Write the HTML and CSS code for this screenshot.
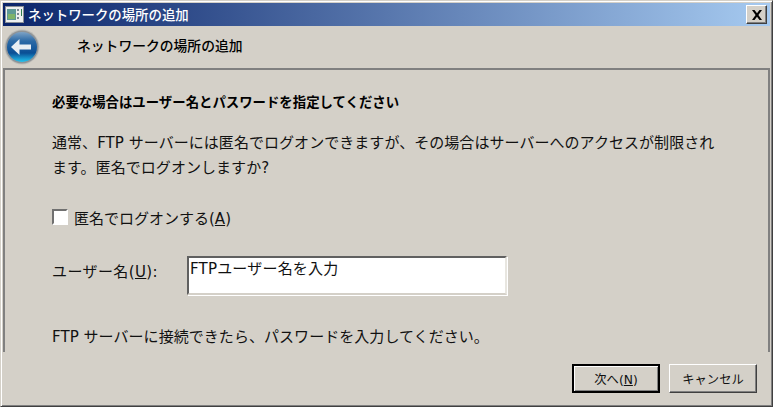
FILE: index.html
```html
<!DOCTYPE html>
<html lang="ja">
<head>
  <meta charset="UTF-8">
  <title>ネットワークの場所の追加</title>
  <link rel="stylesheet" href="styles.css">
</head>
<body>

  <div class="window">
    <!-- Title bar -->
    <div class="titlebar">
      <svg class="app-icon" width="19" height="17" viewBox="0 0 19 17">
        <rect x="0.5" y="0.5" width="18" height="16" fill="#eef0f0" stroke="#8a8f96"/>
        <rect x="2" y="3" width="9" height="11" fill="#5f9a96"/>
        <rect x="3" y="8" width="7" height="5" fill="#7fb36a"/>
        <rect x="12" y="3" width="2" height="2" fill="#7c8794"/>
        <rect x="12" y="7" width="2" height="2" fill="#7c8794"/>
        <rect x="12" y="11" width="2" height="2" fill="#7c8794"/>
        <rect x="16" y="3" width="1" height="7" fill="#2f7d4f"/>
      </svg>
      <span class="title-text">ネットワークの場所の追加</span>
      <button class="close-btn" aria-label="閉じる">
        <svg width="10" height="10" viewBox="0 0 10 10">
          <path d="M0 0h2.500l2.500 3.200 2.500-3.200h2.500l-3.600 5 3.600 5h-2.500l-2.500-3.200-2.500 3.200h-2.500l3.600-5z" fill="#000"/>
        </svg>
      </button>
    </div>

    <!-- Wizard header -->
    <div class="wizard-head">
      <svg class="back-icon" width="36" height="36" viewBox="0 0 36 36">
        <defs>
          <linearGradient id="orb" x1="0" y1="0" x2="0" y2="1">
            <stop offset="0" stop-color="#7ea3c6"/>
            <stop offset="0.3" stop-color="#2c6aa6"/>
            <stop offset="0.7" stop-color="#0a4f96"/>
            <stop offset="1" stop-color="#22c4f0"/>
          </linearGradient>
        </defs>
        <circle cx="18" cy="18" r="17.500" fill="#bdbdb9"/>
        <circle cx="18" cy="18" r="16.500" fill="#8f9498"/>
        <circle cx="18" cy="18" r="15" fill="url(#orb)"/>
        <path d="M7 18l8.500-8v5.500h11.500v5h-11.500v5.500z" fill="#e8eef3"/>
      </svg>
      <span class="wizard-title">ネットワークの場所の追加</span>
    </div>

    <!-- Content -->
    <div class="panel">
      <h1 class="heading">必要な場合はユーザー名とパスワードを指定してください</h1>
      <p class="intro">通常、FTP サーバーには匿名でログオンできますが、その場合はサーバーへのアクセスが制限され<br>ます。匿名でログオンしますか?</p>

      <label class="check-row">
        <span class="checkbox"></span>
        <span>匿名でログオンする(<u>A</u>)</span>
      </label>

      <div class="field-row">
        <span class="field-label">ユーザー名(<u>U</u>):</span>
        <div class="text-input">FTPユーザー名を入力</div>
      </div>

      <p class="note">FTP サーバーに接続できたら、パスワードを入力してください。</p>
    </div>

    <!-- Buttons -->
    <div class="footer">
      <button class="btn btn-default">次へ(<u>N</u>)</button>
      <button class="btn">キャンセル</button>
    </div>
  </div>

</body>
</html>
```

FILE: styles.css
```css
html, body {
  margin: 0;
  padding: 0;
  height: 100%;
  overflow: hidden;
}
body {
  background: #d4d0c8;
  color: #111;
  font-family: "DejaVu Sans", "Noto Sans CJK JP", sans-serif;
  font-size: 15px;
}
.window {
  box-sizing: border-box;
  width: 773px;
  height: 407px;
  display: flex;
  flex-direction: column;
  padding: 1px;
  border-top: 1px solid #d4d0c8;
  border-left: 1px solid #d4d0c8;
  border-right: 1px solid #404040;
  border-bottom: 1px solid #404040;
  box-shadow: inset 1px 1px 0 #fff, inset -1px -1px 0 #808080;
  background: #d4d0c8;
}
.titlebar {
  flex: none;
  height: 23px;
  margin: 1px 1px 0;
  padding: 0 3px 0 2px;
  display: flex;
  align-items: center;
  background: linear-gradient(to right, #0a246a, #a6caf0);
  color: #fff;
}
.app-icon {
  flex: none;
}
.title-text {
  margin-left: 4px;
  flex: 1;
  margin-top: -2px;
  font-size: 13.400px;
  font-weight: 500;
}
.close-btn {
  box-sizing: border-box;
  width: 21px;
  height: 19px;
  padding: 0;
  display: flex;
  align-items: center;
  justify-content: center;
  background: #d4d0c8;
  border: 1px solid;
  border-color: #fff #404040 #404040 #fff;
  box-shadow: inset -1px -1px 0 #808080;
}
.wizard-head {
  flex: none;
  height: 42px;
  padding-left: 2px;
  display: flex;
  align-items: center;
}
.back-icon {
  flex: none;
}
.wizard-title {
  margin-left: 37px;
  margin-top: -5px;
  font-size: 13.800px;
  font-weight: 500;
  color: #000;
}
.panel {
  flex: none;
  box-sizing: border-box;
  height: 284px;
  margin: 0 1px;
  padding: 23px 0 0 47px;
  border: 2px solid #808080;
  border-width: 2px 2px 0;
  overflow: hidden;
}
.heading {
  margin: 0;
  font-size: 13.400px;
  font-weight: 700;
  line-height: 20px;
  color: #000;
}
.intro {
  margin: 18px 0 0;
  line-height: 25px;
  letter-spacing: 0.05px;
}
.check-row {
  margin-top: 26px;
  height: 20px;
  display: flex;
  align-items: center;
  gap: 6px;
}
.checkbox {
  box-sizing: border-box;
  width: 16px;
  height: 16px;
  background: #fff;
  border: 2px solid;
  border-color: #707070 #fff #fff #707070;
}
.field-row {
  margin-top: 29px;
  display: flex;
  align-items: flex-start;
}
.field-label {
  width: 135px;
  margin-top: 6px;
  line-height: 20px;
  letter-spacing: 0.4px;
}
.text-input {
  box-sizing: border-box;
  width: 320px;
  height: 39px;
  padding: 0 1px;
  background: #fff;
  border: 2px solid;
  border-color: #606060 #e8e6e0 #d4d0c8 #606060;
  box-shadow: 1px 1px 0 #fff;
  line-height: 22px;
  letter-spacing: 0.2px;
}
.note {
  margin: 32px 0 0;
  line-height: 20px;
  letter-spacing: 0.05px;
}
.footer {
  flex: 1;
  padding: 12px 14px 0 0;
  display: flex;
  justify-content: flex-end;
  align-items: flex-start;
  gap: 9px;
}
.btn {
  box-sizing: border-box;
  width: 88px;
  height: 29px;
  padding: 0;
  font-family: inherit;
  font-size: 12.300px;
  color: #111;
  background: #d4d0c8;
  border: 1px solid;
  border-color: #fff #404040 #404040 #fff;
  box-shadow: inset -1px -1px 0 #808080;
}
.btn-default {
  border: 2px solid #000;
  box-shadow: inset 1px 1px 0 #fff, inset -1px -1px 0 #808080;
}
```
